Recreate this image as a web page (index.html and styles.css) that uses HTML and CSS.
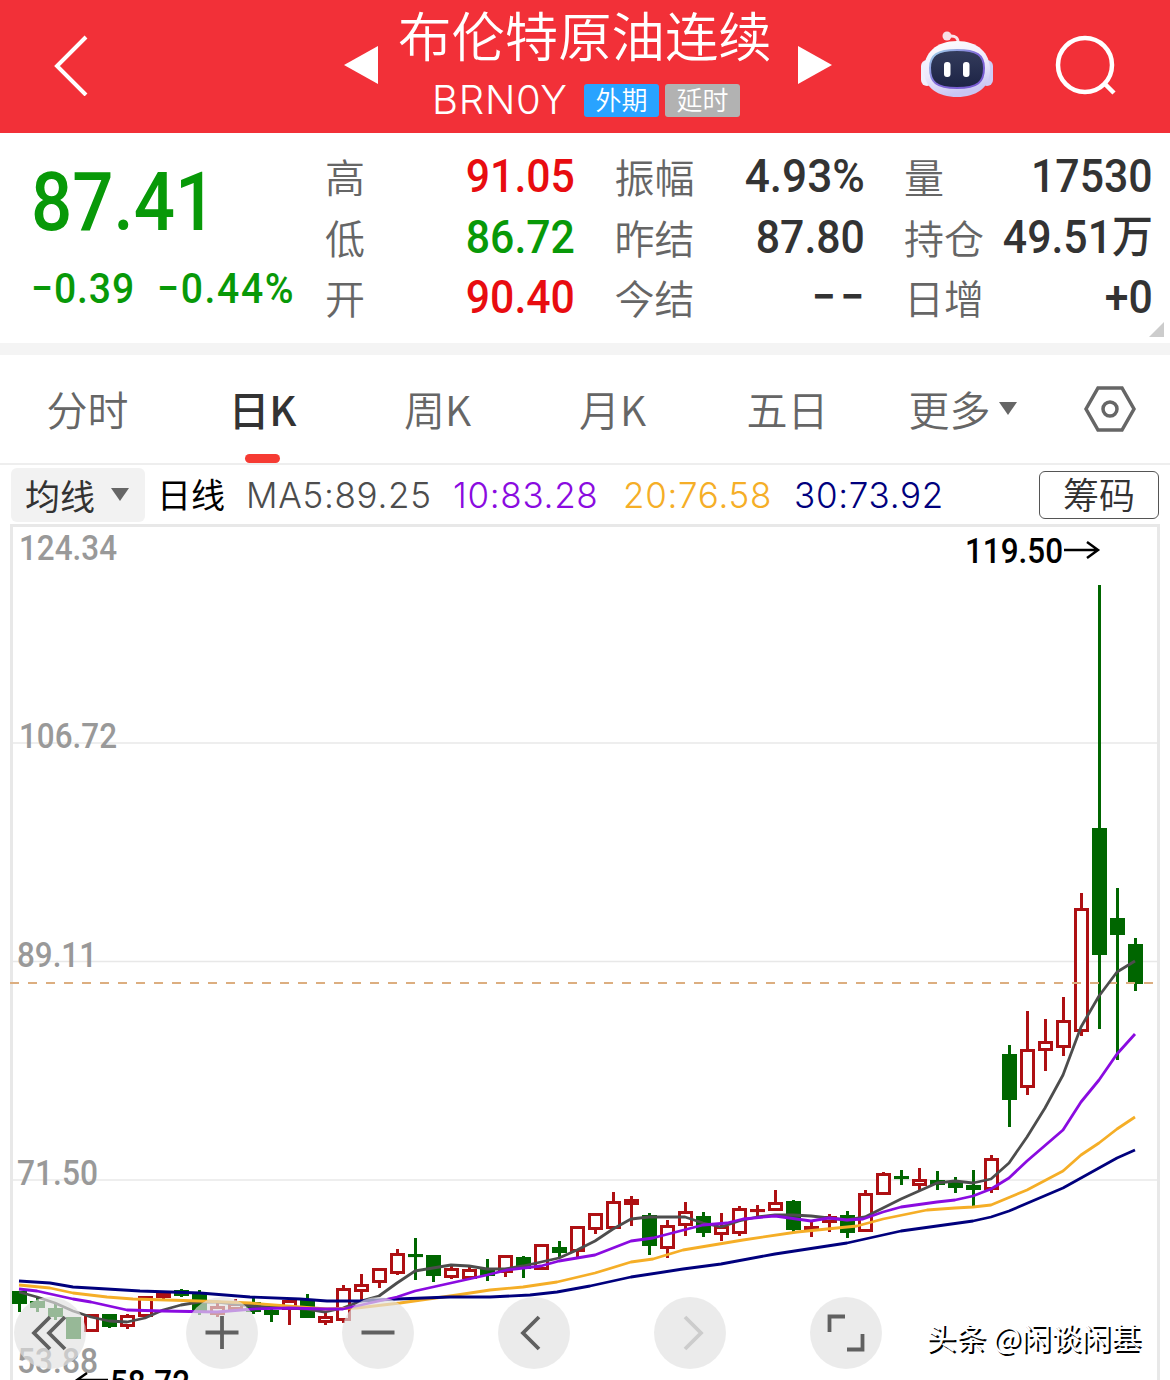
FILE: index.html
```html
<!DOCTYPE html>
<html lang="zh-CN">
<head>
  <meta charset="utf-8">
  <title>布伦特原油连续 BRN0Y</title>
  <link rel="stylesheet" href="styles.css">
</head>
<body>
  <header class="topbar">
    <svg class="back" width="36" height="62" viewBox="0 0 36 62"><path d="M33 3L4 32L33 61" /></svg>
    <svg class="arrow prev" width="34" height="38"><polygon points="34,0 34,38 0,19" /></svg>
    <div class="title">
      <h1>布伦特原油连续</h1>
      <div class="code">
        <span class="symbol">BRN0Y</span>
        <span class="tag blue">外期</span>
        <span class="tag gray">延时</span>
      </div>
    </div>
    <svg class="arrow next" width="34" height="38"><polygon points="0,0 34,19 0,38" /></svg>
    <svg class="robot" width="74" height="68" viewBox="0 0 74 68">
      <defs>
        <linearGradient id="shell" x1="0" y1="0" x2=".3" y2="1">
          <stop offset="0" stop-color="#ffffff" />
          <stop offset=".6" stop-color="#ece8fb" />
          <stop offset="1" stop-color="#c9c6f3" />
        </linearGradient>
        <linearGradient id="rim" x1="0" y1="0" x2="1" y2="1">
          <stop offset="0" stop-color="#a5dcec" />
          <stop offset=".5" stop-color="#8068d8" />
          <stop offset="1" stop-color="#7355cf" />
        </linearGradient>
        <linearGradient id="face" x1="0" y1="0" x2="0" y2="1">
          <stop offset="0" stop-color="#343c5c" />
          <stop offset="1" stop-color="#1c2345" />
        </linearGradient>
      </defs>
      <path d="M29 6Q39 5 38 14" fill="none" stroke="#fbe3ea" stroke-width="3" />
      <circle cx="27" cy="6" r="4.5" fill="#f8dfe6" />
      <rect x="1" y="30" width="12" height="26" rx="6" fill="#f1effc" />
      <rect x="61" y="30" width="12" height="26" rx="6" fill="#cfcbf5" />
      <path d="M37 11C58 11 70 23 70 40C70 58 56 67 37 67C18 67 4 58 4 40C4 23 16 11 37 11Z" fill="url(#shell)" />
      <path d="M37 20C57 20 64 25 64 38C64 52 58 58 37 58C16 58 10 52 10 38C10 25 17 20 37 20Z" fill="url(#face)" stroke="url(#rim)" stroke-width="2" />
      <rect x="24" y="32" width="6.500" height="15" rx="3" fill="#fff" />
      <rect x="43" y="32" width="6.500" height="15" rx="3" fill="#fff" />
    </svg>
    <svg class="search" width="62" height="62" viewBox="0 0 62 62"><circle cx="30" cy="30" r="27" /><path d="M49 48L59 58" /></svg>
  </header>

  <section class="quote">
    <div class="last">
      <div class="price">87.41</div>
      <div class="change"><span>−0.39</span><span class="pct">−0.44%</span></div>
    </div>
    <dl class="stats">
      <div><dt>高</dt><dd class="up">91.05</dd></div>
      <div><dt>振幅</dt><dd class="percent">4.93%</dd></div>
      <div><dt>量</dt><dd>17530</dd></div>
      <div><dt>低</dt><dd class="down">86.72</dd></div>
      <div><dt>昨结</dt><dd>87.80</dd></div>
      <div><dt>持仓</dt><dd>49.51<span class="unit">万</span></dd></div>
      <div><dt>开</dt><dd class="up">90.40</dd></div>
      <div><dt>今结</dt><dd class="dash">−−</dd></div>
      <div><dt>日增</dt><dd>+0</dd></div>
    </dl>
    <i class="corner"></i>
  </section>

  <nav class="tabs">
    <a>分时</a>
    <a class="active">日K</a>
    <a>周K</a>
    <a>月K</a>
    <a>五日</a>
    <a>更多<i class="caret"></i></a>
    <a class="setting"><svg width="52" height="46" viewBox="0 0 52 46"><path d="M14 2H38L50 23L38 44H14L2 23Z" /><circle cx="26" cy="23" r="7" /></svg></a>
  </nav>

  <div class="indicator">
    <button class="ma">均线<i class="caret"></i></button>
    <span class="period">日线</span>
    <span class="val ma5">MA5:89.25</span>
    <span class="val ma10">10:83.28</span>
    <span class="val ma20">20:76.58</span>
    <span class="val ma30">30:73.92</span>
    <button class="chips">筹码</button>
  </div>

  <main class="chart">
    <svg id="kline" width="1170" height="856" viewBox="0 524 1170 856"></svg>
    <div class="controls">
      <button class="first"><svg viewBox="0 0 72 72"><path d="M36 20L20 36L36 52M51 20L35 36L51 52" /></svg></button>
      <button><svg viewBox="0 0 72 72"><path d="M36 19V52M19.500 35.500H52.500" /></svg></button>
      <button><svg viewBox="0 0 72 72"><path d="M19.500 35.500H52.500" /></svg></button>
      <button><svg viewBox="0 0 72 72"><path d="M41 20L25 36L41 52" /></svg></button>
      <button class="off"><svg viewBox="0 0 72 72"><path d="M31 20L47 36L31 52" /></svg></button>
      <button><svg viewBox="0 0 72 72"><path d="M19.500 35V19.500H35M52.500 37V52.500H37" /></svg></button>
    </div>
    <div class="watermark">头条 @闲谈闲基</div>
  </main>
  <script src="chart.js"></script>
</body>
</html>
```
FILE: styles.css
```css
* {
  box-sizing: border-box;
}
body, h1, dl, dd {
  margin: 0;
}
body {
  width: 1170px;
  height: 1380px;
  overflow: hidden;
  background: #fff;
  color: #333;
  font-family: "Noto Sans CJK SC", sans-serif;
}
button {
  border: 0;
  padding: 0;
  font: inherit;
  color: inherit;
}
a, span, button, dt, dd {
  white-space: nowrap;
}

/* top bar */
.topbar {
  display: flex;
  height: 133px;
  background: #f23038;
  color: #fff;
}
.back {
  margin: 34px 0 0 53px;
  fill: none;
  stroke: #fff;
  stroke-width: 4;
}
.arrow {
  margin-top: 46px;
  fill: #fff;
}
.prev {
  margin-left: 255px;
}
.next {
  margin-left: 26px;
}
.title {
  width: 374px;
  margin-left: 20px;
}
h1 {
  height: 72px;
  line-height: 68px;
  font-size: 53.4px;
  font-weight: 350;
  white-space: nowrap;
}
.code {
  display: flex;
  align-items: center;
  height: 56px;
  padding-left: 34px;
}
.symbol {
  width: 152px;
  font: 350 40px/56px Inter, sans-serif;
  letter-spacing: .8px;
}
.tag {
  width: 75px;
  height: 33px;
  margin-right: 6px;
  border-radius: 3px;
  font-size: 26px;
  font-weight: 350;
  line-height: 30px;
  text-align: center;
}
.blue {
  background: #29a3ff;
}
.gray {
  background: #b2b2b2;
}
.robot {
  margin: 30px 0 0 88px;
}
.search {
  margin: 35px 0 0 61px;
  fill: none;
  stroke: #fff;
  stroke-width: 4.5;
}

/* quote */
.quote {
  position: relative;
  display: flex;
  height: 222px;
  border-bottom: 12px solid #f4f4f4;
}
.last {
  width: 325px;
  padding: 21px 0 0 31px;
  color: #089908;
  font-family: Roboto, sans-serif;
  font-weight: 500;
}
.price {
  height: 96px;
  font-size: 82px;
  line-height: 96px;
  transform: scaleX(.885);
  transform-origin: left;
}
.change {
  display: flex;
  font-size: 43px;
  line-height: 76px;
  letter-spacing: 1px;
  transform: scaleX(.91);
  transform-origin: left;
}
.pct {
  margin-left: 24px;
  letter-spacing: 1.8px;
}
.stats {
  display: grid;
  grid-template-columns: 250px 250px 249px;
  grid-auto-rows: 60.500px;
  column-gap: 39.500px;
  padding-top: 14px;
}
.stats div {
  display: flex;
  justify-content: space-between;
}
dt {
  color: #666;
  font-size: 40px;
  font-weight: 350;
  line-height: 58px;
}
dd {
  font: 500 47px/58px Roboto, "Noto Sans CJK SC", sans-serif;
  transform: scaleX(.91);
  transform-origin: right;
}
.percent {
  transform: scaleX(.94);
}
.dash {
  letter-spacing: 5px;
  margin-right: -4px;
}
.unit {
  font-size: 45px;
  line-height: 50px;
}
.up {
  color: #e80c10;
}
.down {
  color: #089908;
}
.corner {
  position: absolute;
  right: 6px;
  bottom: 6px;
  border-bottom: 15px solid #ccc;
  border-left: 15px solid transparent;
}

/* period tabs */
.tabs {
  display: flex;
  height: 110px;
  border-bottom: 2px solid #eee;
  color: #666;
  font-size: 41px;
  font-weight: 350;
}
.tabs a {
  position: relative;
  display: flex;
  align-items: center;
  justify-content: center;
  width: 175px;
  padding-bottom: 2px;
}
.tabs .active {
  color: #333;
  font-weight: 500;
}
.tabs .active::after {
  content: "";
  position: absolute;
  left: 70px;
  bottom: 0;
  width: 35px;
  height: 9px;
  border-radius: 5px;
  background: #f63b33;
}
.tabs .setting {
  width: 120px;
  padding: 0;
}
.setting svg {
  fill: none;
  stroke: #666;
  stroke-width: 3.5;
}
.caret {
  margin-left: 8px;
  border: 9px solid transparent;
  border-top: 13px solid #666;
  border-bottom: 0;
}

/* moving average row */
.indicator {
  display: flex;
  align-items: center;
  height: 59px;
  padding: 0 11px;
}
.ma {
  display: flex;
  align-items: center;
  width: 134px;
  height: 54px;
  padding-left: 14px;
  border-radius: 6px;
  background: #f2f2f2;
  font-size: 35px;
  line-height: 52px;
}
.ma .caret {
  margin-left: 16px;
}
.period {
  width: 78px;
  margin-left: 12px;
  padding-bottom: 2px;
  color: #000;
  font-size: 34px;
}
.val {
  margin-left: 11px;
  font: 350 35px/54px Inter, sans-serif;
  letter-spacing: .7px;
}
.ma5 {
  width: 196px;
  color: #4d4d4d;
}
.ma10 {
  width: 159px;
  color: #8a0be0;
}
.ma20 {
  width: 160px;
  color: #f5ae27;
}
.ma30 {
  color: #00007d;
}
.chips {
  width: 120px;
  height: 48px;
  margin-left: auto;
  border: 1.500px solid #555;
  border-radius: 6px;
  background: #fff;
  font-size: 36px;
  font-weight: 350;
  line-height: 40px;
  padding-bottom: 4px;
}

/* chart */
.chart {
  position: relative;
  height: 856px;
}
#kline {
  display: block;
}
.frame, .grid {
  fill: none;
  stroke: #e8e8e8;
  stroke-width: 3;
}
.grid {
  stroke-width: 1.5;
}
.axis {
  fill: #999;
  font: 500 35px Roboto, sans-serif;
}
.mark {
  fill: #000;
  font: 500 35px Roboto, sans-serif;
}
.mark-arrow {
  fill: none;
  stroke: #000;
  stroke-width: 2.500;
}
.current {
  stroke: #dcae80;
  stroke-width: 1.800;
  stroke-dasharray: 9 9;
}
.rise {
  fill: #fff;
  stroke: #ae1013;
  stroke-width: 3;
}
.fall {
  fill: #006600;
  stroke: #006600;
  stroke-width: 3;
}
.line {
  fill: none;
  stroke-width: 2.800;
  stroke-linejoin: round;
}
.controls {
  position: absolute;
  left: 14px;
  top: 773px;
  display: flex;
  gap: 84px;
}
.controls button {
  width: 72px;
  height: 72px;
  border-radius: 50%;
  background: rgba(225, 225, 225, .67);
}
.controls .first {
  margin-right: 16px;
}
.controls svg {
  display: block;
  fill: none;
  stroke: #606060;
  stroke-width: 3.800;
}
.controls .off svg {
  stroke: #ccc;
}
.watermark {
  position: absolute;
  left: 926px;
  top: 790px;
  color: #fff;
  font-size: 30px;
  line-height: 44px;
  text-shadow: 2px 2px 0 #000;
}
```
FILE: chart.js
```js
// [high, body top, body bottom, low, rising]
var candles = [
  [1291,1291,1304,1312,0], [1298,1301,1308,1312,0], [1304,1308,1317,1320,0], [1317,1317,1339,1339,0],
  [1314,1314,1332,1332,1], [1314,1314,1327,1328,0], [1314,1315,1327,1329,1], [1296,1296,1317,1317,1],
  [1292,1292,1298,1300,1], [1289,1290,1296,1297,0], [1290,1293,1313,1315,0], [1303,1306,1315,1317,1],
  [1299,1303,1310,1310,1], [1297,1302,1312,1314,0], [1308,1310,1315,1322,0], [1300,1300,1310,1325,1],
  [1294,1300,1318,1318,0], [1312,1316,1323,1325,1], [1285,1288,1321,1323,1], [1274,1284,1292,1300,1],
  [1268,1268,1283,1288,1], [1249,1253,1274,1275,1], [1238,1254,1257,1280,0], [1255,1255,1276,1282,0],
  [1266,1268,1278,1279,1], [1267,1269,1279,1280,1], [1259,1269,1276,1281,0], [1255,1255,1273,1277,1],
  [1256,1257,1269,1278,0], [1244,1244,1270,1270,1], [1241,1247,1253,1257,0], [1226,1226,1252,1257,1],
  [1213,1213,1230,1234,1], [1192,1201,1229,1229,1], [1196,1199,1205,1226,1], [1213,1215,1246,1255,0],
  [1220,1225,1249,1258,1], [1202,1211,1226,1236,1], [1212,1216,1233,1237,0], [1213,1226,1235,1241,1],
  [1206,1208,1234,1236,1], [1205,1209,1212,1216,1], [1190,1202,1211,1211,1], [1200,1201,1230,1232,0],
  [1222,1226,1231,1237,1], [1214,1216,1223,1232,1], [1211,1215,1233,1238,0], [1190,1193,1232,1232,1],
  [1172,1173,1195,1195,1], [1170,1176,1179,1185,0], [1168,1179,1186,1190,1], [1171,1180,1185,1190,0],
  [1177,1181,1188,1193,0], [1170,1185,1190,1208,0], [1155,1158,1190,1193,1], [1045,1054,1100,1127,0],
  [1011,1049,1088,1095,1], [1019,1041,1051,1071,1], [997,1020,1048,1056,1], [893,908,1032,1036,1],
  [585,828,955,1029,0], [888,918,935,1060,0], [938,944,984,991,0]
];
var lines = {
  '#4d4d4d': '19,1292 37,1297 55,1303 73,1311 91,1317 109,1321 127,1322 145,1318 163,1310 181,1305 199,1302 217,1302 235,1304 253,1306 289,1308 307,1309 325,1312 343,1308 361,1301 379,1296 397,1283 415,1271 433,1268 451,1265 469,1266 487,1269 505,1269 523,1266 541,1262 559,1258 577,1250 595,1241 613,1229 631,1219 649,1217 685,1217 703,1223 721,1227 739,1221 757,1217 775,1215 793,1215 811,1216 829,1218 847,1220 865,1217 883,1208 901,1199 919,1191 937,1183 955,1181 973,1183 991,1179 1009,1163 1027,1137 1045,1108 1063,1075 1081,1027 1099,996 1117,972 1135,961',
  '#f5ae27': '19,1285 50,1288 73,1293 107,1297 133,1299 200,1301 250,1303 300,1307 327,1309 357,1308 400,1303 457,1295 490,1290 523,1287 557,1282 595,1273 631,1262 653,1259 683,1250 743,1240 797,1232 857,1226 883,1219 927,1210 955,1208 973,1207 991,1205 1027,1190 1063,1171 1081,1155 1099,1143 1117,1129 1135,1117',
  '#00007d': '19,1281 50,1283 73,1287 107,1289 140,1291 200,1293 250,1297 300,1299 327,1301 360,1301 397,1299 450,1297 490,1297 530,1295 557,1292 590,1286 631,1277 683,1269 721,1264 775,1254 847,1243 901,1231 937,1226 973,1221 991,1217 1009,1211 1063,1188 1117,1158 1135,1150',
  '#8a0be0': '19,1289 37,1291 55,1295 73,1299 91,1302 127,1310 163,1311 217,1312 253,1309 289,1308 325,1309 343,1309 379,1301 397,1297 415,1291 451,1283 487,1275 507,1270 541,1266 559,1261 595,1255 631,1241 653,1238 703,1225 727,1223 743,1219 775,1216 811,1221 829,1218 847,1220 863,1219 883,1212 901,1207 937,1202 955,1200 973,1196 991,1189 1009,1178 1027,1161 1063,1130 1081,1102 1099,1080 1117,1054 1135,1034'
};
var labels = [[19, 560, 98, '124.34'], [19, 748, 98, '106.72'], [17, 967, 80, '89.11'], [17, 1185, 81, '71.50'], [17, 1373, 81, '53.88']];

var out = '<rect class="frame" x="11.500" y="525.500" width="1147" height="900"/>';
[743, 961.5, 1180].forEach(function(y) {
  out += '<path class="grid" d="M12 ' + y + 'H1158"/>';
});
function text(cls, x, y, w, s) {
  return '<text class="' + cls + '" x="' + x + '" y="' + y + '" textLength="' + w + '" lengthAdjust="spacingAndGlyphs">' + s + '</text>';
}
labels.forEach(function(l) {
  out += text('axis', l[0], l[1], l[2], l[3]);
});
candles.forEach(function(c, i) {
  var x = 19 + 18 * i + .5;
  var cls = c[4] ? 'rise' : 'fall';
  out += '<path class="' + cls + '" d="M' + x + ' ' + c[0] + 'V' + c[3] + '"/>';
  out += '<rect class="' + cls + '" x="' + (x - 6) + '" y="' + (c[1] + 1.5) + '" width="12" height="' + Math.max(c[2] - c[1] - 3, .1) + '"/>';
});
out += '<path class="current" d="M10 983H1158"/>';
for (var color in lines) {
  out += '<polyline class="line" stroke="' + color + '" points="' + lines[color] + '"/>';
}
out += text('mark', 965, 563, 98, '119.50');
out += '<path class="mark-arrow" d="M1064 550H1098M1087 542L1098 550L1087 558"/>';
out += text('mark', 110, 1395, 80, '58.72');
out += '<path class="mark-arrow" d="M108 1380H77M87 1373L77 1380L87 1388"/>';
document.getElementById('kline').innerHTML = out;
```
